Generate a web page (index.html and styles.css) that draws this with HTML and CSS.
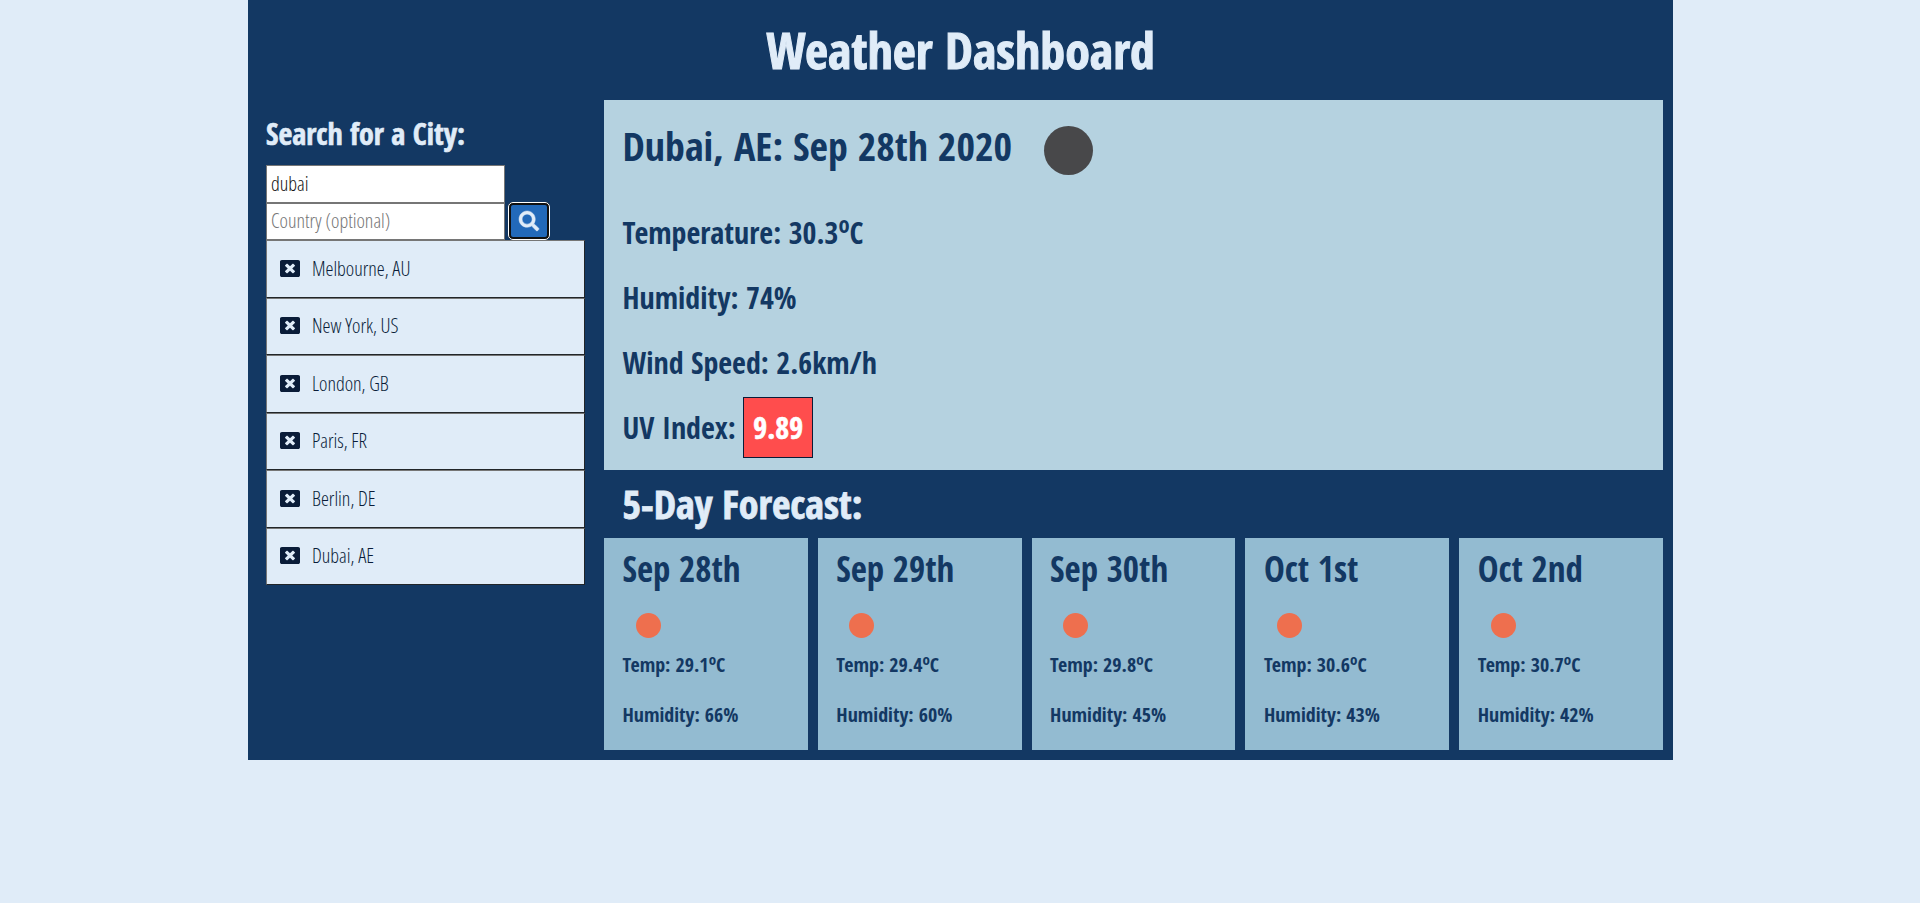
FILE: index.html
```html
<!DOCTYPE html>
<html lang="en">
<head>
<meta charset="utf-8">
<title>Weather Dashboard</title>
<link rel="stylesheet" href="styles.css">
</head>
<body>
<svg class="defs" aria-hidden="true">
  <symbol id="close" viewBox="0 32 512 448" preserveAspectRatio="none">
    <path fill="#0a1c38" d="M464 32H48C21.500 32 0 53.500 0 80v352c0 26.500 21.500 48 48 48h416c26.500 0 48-21.500 48-48V80c0-26.500-21.500-48-48-48zm-83.600 290.500c4.800 4.800 4.800 12.600 0 17.400l-40.500 40.500c-4.800 4.800-12.600 4.800-17.400 0L256 313.300l-66.500 67.100c-4.800 4.800-12.600 4.800-17.400 0l-40.500-40.500c-4.800-4.800-4.800-12.600 0-17.400l67.100-66.500-67.100-66.500c-4.800-4.800-4.800-12.600 0-17.400l40.500-40.500c4.800-4.800 12.600-4.800 17.400 0l66.500 67.100 66.500-67.100c4.800-4.800 12.600-4.800 17.400 0l40.500 40.500c4.800 4.800 4.800 12.600 0 17.400L313.300 256l67.100 66.500z"/>
  </symbol>
</svg>
<div class="container">
  <header class="header"><h1 class="title">Weather Dashboard</h1></header>
  <div class="columns">
    <aside class="sidebar">
      <h2 class="search-title">Search for a City:</h2>
      <form class="search">
        <input class="field" type="text" value="dubai">
        <div class="search-row">
          <input class="field" type="text" placeholder="Country (optional)">
          <button class="search-button" type="button" aria-label="Search">
            <svg class="search-icon" viewBox="0 0 512 512"><path d="M505 442.700 405.300 343c-4.500-4.500-10.600-7-17-7H372c27.600-35.300 44-79.700 44-128C416 93.100 322.900 0 208 0S0 93.100 0 208s93.100 208 208 208c48.300 0 92.700-16.400 128-44v16.300c0 6.400 2.500 12.500 7 17l99.700 99.700c9.400 9.400 24.600 9.400 33.900 0l28.300-28.300c9.400-9.400 9.400-24.600.1-34zM208 336c-70.700 0-128-57.200-128-128 0-70.700 57.200-128 128-128 70.700 0 128 57.200 128 128 0 70.700-57.200 128-128 128z"/></svg>
          </button>
        </div>
      </form>
      <ul class="cities">
        <li class="city"><svg class="close"><use href="#close"/></svg><span>Melbourne, AU</span></li>
        <li class="city"><svg class="close"><use href="#close"/></svg><span>New York, US</span></li>
        <li class="city"><svg class="close"><use href="#close"/></svg><span>London, GB</span></li>
        <li class="city"><svg class="close"><use href="#close"/></svg><span>Paris, FR</span></li>
        <li class="city"><svg class="close"><use href="#close"/></svg><span>Berlin, DE</span></li>
        <li class="city"><svg class="close"><use href="#close"/></svg><span>Dubai, AE</span></li>
      </ul>
    </aside>
    <main class="main">
      <section class="current">
        <div class="current-head"><h2 class="current-title">Dubai, AE: Sep 28th 2020</h2><span class="night"></span></div>
        <p class="stat">Temperature: 30.3<sup>o</sup>C</p>
        <p class="stat">Humidity: 74%</p>
        <p class="stat">Wind Speed: 2.6km/h</p>
        <p class="stat">UV Index: <span class="uv">9.89</span></p>
      </section>
      <h2 class="forecast-title">5-Day Forecast:</h2>
      <section class="forecast">
        <article class="day"><h3 class="date">Sep 28th</h3><span class="sun"></span><p class="detail">Temp: 29.1<sup>o</sup>C</p><p class="detail">Humidity: 66%</p></article>
        <article class="day"><h3 class="date">Sep 29th</h3><span class="sun"></span><p class="detail">Temp: 29.4<sup>o</sup>C</p><p class="detail">Humidity: 60%</p></article>
        <article class="day"><h3 class="date">Sep 30th</h3><span class="sun"></span><p class="detail">Temp: 29.8<sup>o</sup>C</p><p class="detail">Humidity: 45%</p></article>
        <article class="day"><h3 class="date">Oct 1st</h3><span class="sun"></span><p class="detail">Temp: 30.6<sup>o</sup>C</p><p class="detail">Humidity: 43%</p></article>
        <article class="day"><h3 class="date">Oct 2nd</h3><span class="sun"></span><p class="detail">Temp: 30.7<sup>o</sup>C</p><p class="detail">Humidity: 42%</p></article>
      </section>
    </main>
  </div>
</div>
</body>
</html>
```
FILE: styles.css
```css
* { box-sizing: border-box; }
body {
  margin: 0;
  background: #e0ecf8;
  font-family: "Open Sans Condensed", "Open Sans", sans-serif;
  font-stretch: 75%;
  color: #133863;
}
h1, h2, h3, p, ul { margin: 0; padding: 0; }
sup { position: relative; top: -0.5em; font-size: 75%; line-height: 0; vertical-align: baseline; }
.defs { display: none; }
.container { width: 1425px; height: 760px; margin-left: 248px; background: #133863; }
.header { height: 100px; text-align: center; }
.title { font-size: 50px; line-height: 100px; font-weight: 700; color: #e0ecf8; -webkit-text-stroke: 1px #e0ecf8; }
.columns { display: flex; }
.sidebar { width: 356px; padding: 13px 19px 0 18px; }
.search-title { font-size: 30px; line-height: 41px; font-weight: 700; color: #e0ecf8; -webkit-text-stroke: 0.6px #e0ecf8; }
.search { margin-top: 11px; }
.field {
  display: block; width: 239px; height: 38px; margin: 0; padding: 0 5px 2px 4px;
  border: 1px solid #767676; background: #fff; color: #111;
  font-family: "Open Sans", sans-serif; font-stretch: 75%; font-size: 20px; font-weight: 300;
}
.field::placeholder { color: #757575; }
.search-row { display: flex; height: 37px; gap: 3px; }
.search-row .field { height: 37px; }
.search-button {
  width: 42px; height: 38px; margin-top: -1px; padding: 0 0 1px; border: 3px solid #101010; border-radius: 5px;
  outline: 1px solid #fff; outline-offset: -1px; background: #2269b9;
  display: flex; align-items: center; justify-content: center;
}
.search-icon { width: 20px; height: 20px; fill: #e0ecf8; stroke: #e0ecf8; stroke-width: 12; overflow: visible; }
.cities { list-style: none; }
.city {
  display: flex; align-items: center; gap: 12px; height: 57.5px; padding: 0 0 1px 13px;
  background: #e0ecf8; border: 1px solid #212529; border-top-color: #767676; border-left-color: #767676;
  font-family: "Open Sans", sans-serif; font-size: 20px; font-weight: 300; color: #0a1c38;
}
.close { width: 20px; height: 17px; }
.main { width: 1059px; }
.current { height: 370px; padding: 14px 18.5px; background: #b5d2e0; }
.current-head { display: flex; align-items: center; height: 70px; gap: 32.500px; margin-bottom: 16px; }
.current-title { font-size: 40px; line-height: 63px; height: 70px; font-weight: 700; }
.night { width: 49px; height: 49px; border-radius: 50%; background: #48484a; margin-top: 3px; }
.stat { font-size: 30px; line-height: 65px; height: 65px; font-weight: 700; }
.uv {
  padding: 9px 9px; border: 1px solid #0a1c38; background: #ff4d4d; color: #fff;
  -webkit-text-stroke: 0.6px #fff;
}
.forecast-title { height: 68px; padding-left: 18.500px; font-size: 40px; line-height: 68px; font-weight: 700; color: #e0ecf8; -webkit-text-stroke: 0.8px #e0ecf8; }
.forecast { display: grid; grid-template-columns: repeat(5, 1fr); gap: 10px; }
.day { height: 212px; padding: 7px 18.500px; background: #93bbd1; }
.date { font-size: 35px; line-height: 48px; font-weight: 700; }
.sun { display: block; width: 25px; height: 25px; margin: 20px 0 2px 13px; border-radius: 50%; background: #ee6f4e; }
.detail { font-size: 20px; line-height: 50px; height: 50px; font-weight: 700; }
```
